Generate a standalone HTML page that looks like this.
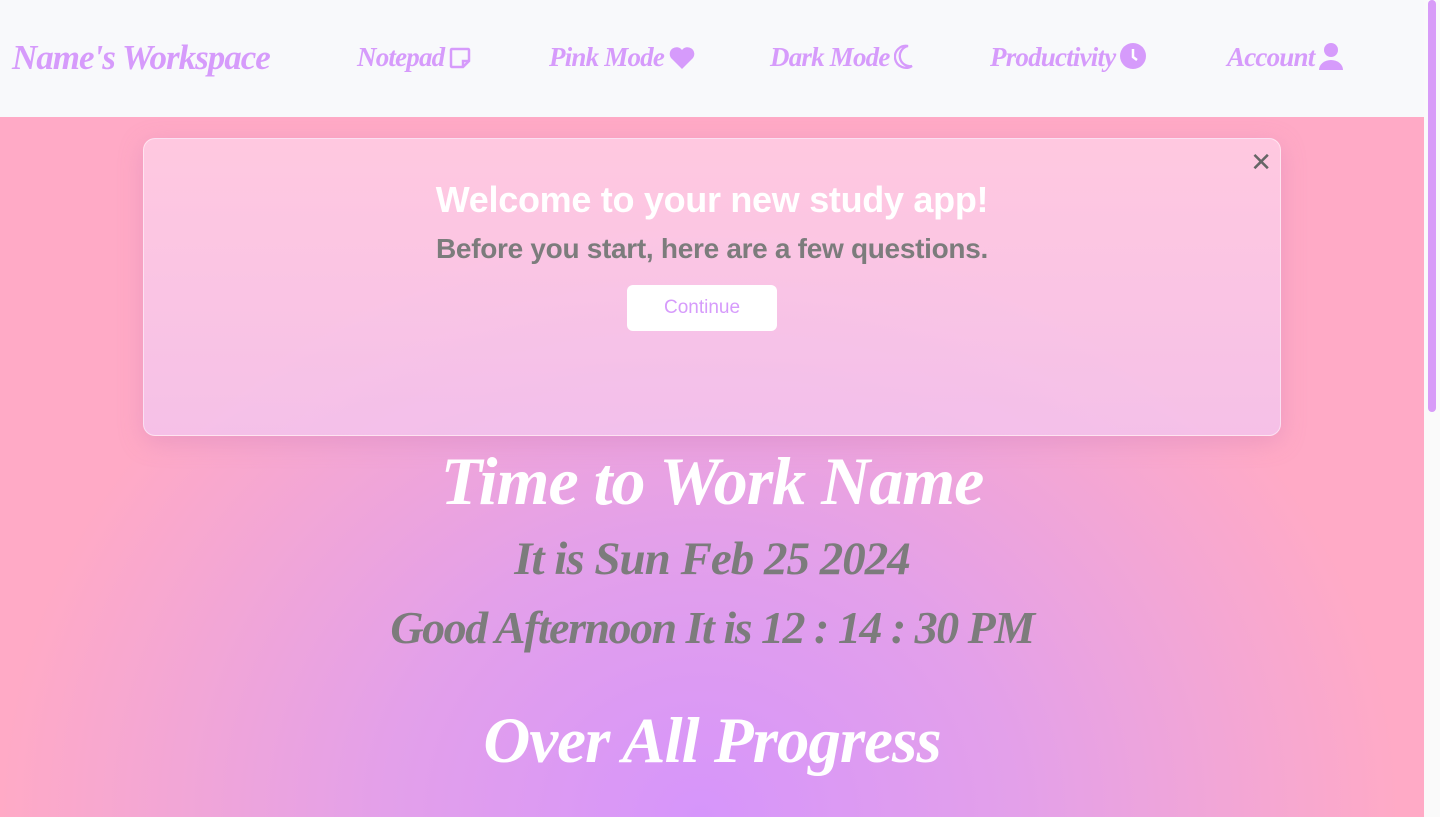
<!DOCTYPE html>
<html><head><meta charset="utf-8"><style>
*{margin:0;padding:0;box-sizing:border-box}
body{width:1440px;height:817px;overflow:hidden;position:relative;background:#fff;font-family:"Liberation Sans",sans-serif}
.script{font-family:"Liberation Serif",serif;font-style:italic;font-weight:bold}
nav{position:absolute;left:0;top:0;width:1424px;height:117px;background:#f8f9fb}
nav span{position:absolute;top:42px;color:#d69bfb;font-size:27px;letter-spacing:-0.8px}
nav .brand{font-size:35px;top:38px;left:12px;letter-spacing:-1px}
nav svg{vertical-align:-4px;margin-left:4px}
main{position:absolute;left:0;top:117px;width:1424px;height:700px;
background:radial-gradient(ellipse 700px 620px at 700px 700px,#d695fb 0%,#e3a0ea 45%,#f2a6d6 75%,#ffaac6 100%)}
.sb{position:absolute;left:1424px;top:0;width:16px;height:817px;background:#fafafa}
.sb div{position:absolute;left:4px;top:0;width:8px;height:412px;border-radius:4px;background:#d89cf8}
.modal{position:absolute;left:143px;top:138px;width:1138px;height:298px;border-radius:12px;
background:linear-gradient(#ffd0e6cc,#f3c6efcc);border:1px solid rgba(255,255,255,0.5);box-shadow:0 6px 24px rgba(200,120,180,0.35);text-align:center}
.modal h1{font-weight:bold;color:#fff;font-size:36px;margin-top:40px;letter-spacing:-0.3px}
.modal h2{font-weight:bold;color:#7c7c7c;font-size:28px;margin-top:12px;letter-spacing:-0.3px}
.btn{display:inline-block;margin-top:20px;margin-right:20px;width:150px;height:46px;line-height:46px;background:#fff;border-radius:6px;color:#d69bfb;font-size:19px}
.x{position:absolute;right:8px;top:8px;color:#666;font-size:26px}
.c{position:absolute;left:0;width:1424px;text-align:center}
</style></head><body>
<nav>
<span class="script brand">Name's Workspace</span>
<span class="script" style="left:357px">Notepad<svg width="24" height="24" viewBox="0 0 24 24"><path d="M4 3h16a1 1 0 0 1 1 1v11l-6 6H4a1 1 0 0 1-1-1V4a1 1 0 0 1 1-1z M15 21v-6h6" fill="none" stroke="#d69bfb" stroke-width="2.5"/></svg></span>
<span class="script" style="left:549px">Pink Mode<svg width="28" height="24" viewBox="0 0 28 24"><path d="M14 23L3 12a6.5 6.5 0 0 1 11-8 6.5 6.5 0 0 1 11 8z" fill="#d69bfb"/></svg></span>
<span class="script" style="left:770px">Dark Mode<svg width="20" height="26" viewBox="0 0 20 26"><path d="M14 2a11 11 0 1 0 4 20A9 9 0 0 1 14 2z" fill="none" stroke="#d69bfb" stroke-width="2.3"/></svg></span>
<span class="script" style="left:990px">Productivity<svg width="28" height="28" viewBox="0 0 28 28"><circle cx="14" cy="14" r="13" fill="#d69bfb"/><path d="M14 7v8l4 3" stroke="#fff" stroke-width="2.5" fill="none"/></svg></span>
<span class="script" style="left:1227px">Account<svg width="26" height="28" viewBox="0 0 26 28"><circle cx="13" cy="8" r="7" fill="#d69bfb"/><path d="M1 28a12 10 0 0 1 24 0z" fill="#d69bfb"/></svg></span>
</nav>
<main></main>
<div class="modal"><div class="x">✕</div>
<h1>Welcome to your new study app!</h1>
<h2>Before you start, here are a few questions.</h2>
<div class="btn">Continue</div></div>
<div class="c script" style="top:442px;color:#fff;font-size:68px;letter-spacing:-1px">Time to Work Name</div>
<div class="c script" style="top:532px;color:#7c7c7c;font-size:47px;letter-spacing:-1px">It is Sun Feb 25 2024</div>
<div class="c script" style="top:601px;color:#7c7c7c;font-size:46px;letter-spacing:-1.5px">Good Afternoon It is 12 : 14 : 30 PM</div>
<div class="c script" style="top:704px;color:#fff;font-size:65px;letter-spacing:-1px">Over All Progress</div>
<div class="sb"><div></div></div>
</body></html>
